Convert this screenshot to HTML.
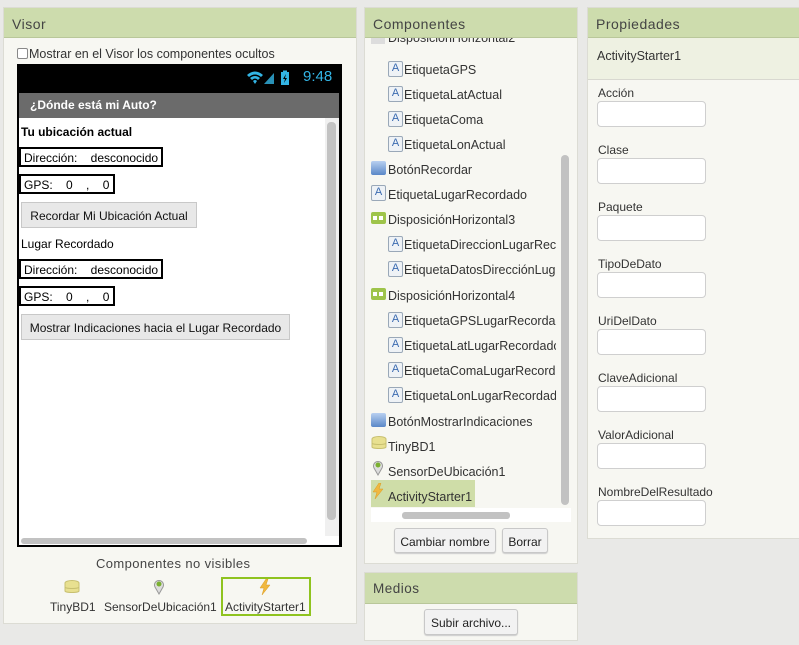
<!DOCTYPE html>
<html><head><meta charset="utf-8"><style>
*{box-sizing:border-box;margin:0;padding:0}
body{width:799px;height:645px;background:#e9e9e7;font-family:"Liberation Sans","DejaVu Sans",sans-serif;position:relative;overflow:hidden;color:#222}
.a{position:absolute}
.panel{position:absolute;background:#f7f7f2;border:1px solid #dcdcd4}
.hdr{position:absolute;left:0;right:0;top:0;height:30px;background:#cddcad;border-bottom:1px solid #b9c79a;font-size:14px;letter-spacing:.5px;color:#444;padding:8px 0 0 8px}
.t{position:absolute;font-size:12.5px;color:#333;white-space:nowrap}
.ic{position:absolute;width:15px;height:16px;background:#eef2f6;border:1px solid #9aa8b8;border-radius:2px;font-size:11px;color:#3a6ab0;text-align:center;line-height:13px}
.btn{position:absolute;background:#f2f2f2;border:1px solid #c8c8c8;border-radius:3px;font-size:12px;color:#222;text-align:center;box-shadow:0 1px 1px #ccc}
.box{position:absolute;border:2px solid #000;font-size:12px;color:#000;padding:2px 0 0 3px;white-space:pre;background:#fff}
.pb{position:absolute;background:#e8e8e8;border:1px solid #c8c8c8;font-size:12px;color:#111;text-align:center}
.inp{position:absolute;left:9px;width:109px;height:26px;background:#fff;border:1px solid #cfcfcf;border-radius:4px}
.lbl{position:absolute;left:10px;font-size:12px;color:#333}
</style></head><body>

<div class="panel" style="left:3px;top:7px;width:354px;height:617px">
 <div class="hdr">Visor</div>
</div>
<div class="a" style="left:17px;top:48px;width:11px;height:11px;border:1px solid #888;border-radius:2px;background:#fff"></div>
<div class="t" style="left:29px;top:47px;font-size:12.5px">Mostrar en el Visor los componentes ocultos</div>

<div class="a" style="left:17px;top:64px;width:325px;height:483px;background:#000"></div>
<div class="a" style="left:303px;top:68px;font-size:15px;color:#33b5e5">9:48</div>
<svg class="a" style="left:246px;top:69px" width="50" height="18" viewBox="0 0 50 18">
 <path d="M1 6 Q9 -1 17 6 L15 8 Q9 3 3 8Z M4 9 Q9 5 14 9 L12 11 Q9 8 6 11Z M7 12 Q9 10 11 12 L9 15Z" fill="#33b5e5"/>
 <path d="M18 15 L28 4 L28 15Z" fill="#33b5e5" opacity=".8"/>
 <rect x="35" y="3" width="8" height="13" fill="#33b5e5"/><rect x="37" y="1.5" width="4" height="2" fill="#33b5e5"/>
 <path d="M40 5 L37 10 L39 10 L38 14 L41 9 L39 9Z" fill="#000"/>
</svg>
<div class="a" style="left:19px;top:93px;width:320px;height:25px;background:#6b6b6b;color:#fff;font-size:12px;font-weight:bold;padding:5px 0 0 11px">¿Dónde está mi Auto?</div>
<div class="a" style="left:19px;top:118px;width:306px;height:418px;background:#fff"></div>
<div class="a" style="left:325px;top:118px;width:14px;height:418px;background:#f0f0f0"></div>
<div class="a" style="left:327px;top:122px;width:9px;height:398px;background:#c2c2c2;border-radius:4px"></div>
<div class="a" style="left:19px;top:536px;width:320px;height:9px;background:#fff"></div>
<div class="a" style="left:21px;top:538px;width:286px;height:6px;background:#c2c2c2;border-radius:3px"></div>

<div class="t" style="left:21px;top:125px;font-weight:bold;color:#000;font-size:12px">Tu ubicación actual</div>
<div class="box" style="left:19px;top:147px;width:144px;height:20px">Dirección:    desconocido</div>
<div class="box" style="left:19px;top:174px;width:96px;height:20px">GPS:    0    ,    0</div>
<div class="pb" style="left:21px;top:202px;width:176px;height:26px;padding-top:6px">Recordar Mi Ubicación Actual</div>
<div class="t" style="left:21px;top:237px;color:#000;font-size:12px">Lugar Recordado</div>
<div class="box" style="left:19px;top:259px;width:144px;height:20px">Dirección:    desconocido</div>
<div class="box" style="left:19px;top:286px;width:96px;height:20px">GPS:    0    ,    0</div>
<div class="pb" style="left:21px;top:314px;width:269px;height:26px;padding-top:6px">Mostrar Indicaciones hacia el Lugar Recordado</div>

<div class="t" style="left:96px;top:556px;font-size:13px;color:#444;letter-spacing:.4px">Componentes no visibles</div>
<svg class="a" style="left:64px;top:580px" width="16" height="14"><ellipse cx="8" cy="3" rx="7" ry="2.5" fill="#e8e090" stroke="#c8c070"/><path d="M1 3v8c0 2 14 2 14 0V3" fill="#e8e090" stroke="#c8c070"/><path d="M1 7c0 2 14 2 14 0" fill="none" stroke="#c8c070"/></svg>
<svg class="a" style="left:153px;top:579px" width="12" height="16"><path d="M6 15 L2 8 A4.5 4.5 0 1 1 10 8Z" fill="#ddd" stroke="#999"/><circle cx="6" cy="5" r="2.5" fill="#7ab030"/></svg>
<div class="a" style="left:221px;top:577px;width:90px;height:39px;border:2px solid #8fc31f"></div>
<svg class="a" style="left:259px;top:579px" width="12" height="16"><path d="M7 0 L1 9 L5 9 L3 16 L11 6 L7 6 L9 0Z" fill="#f0b840" stroke="#d99a20" stroke-width=".5"/></svg>
<div class="t" style="left:50px;top:600px;font-size:12px">TinyBD1</div>
<div class="t" style="left:104px;top:600px;font-size:12px">SensorDeUbicación1</div>
<div class="t" style="left:225px;top:600px;font-size:12px">ActivityStarter1</div>

<div class="panel" style="left:364px;top:7px;width:214px;height:557px">
 <div class="hdr">Componentes</div>
</div>
<div class="a" style="left:371px;top:38px;width:190px;height:8px;overflow:hidden"><div class="t" style="left:17px;top:-7px">DisposiciónHorizontal2</div><div class="a" style="left:0;top:0;width:14px;height:6px;background:#ddd"></div></div>
<div class="a" style="left:561px;top:155px;width:8px;height:350px;background:#c2c2c2;border-radius:4px"></div>
<div class="a" style="left:371px;top:508px;width:200px;height:14px;background:#fff"></div>
<div class="a" style="left:402px;top:512px;width:108px;height:7px;background:#c2c2c2;border-radius:3px"></div>

<div class="ic" style="left:388px;top:61px">A</div><div class="t" style="left:404px;top:63px">EtiquetaGPS</div>
<div class="ic" style="left:388px;top:86px">A</div><div class="t" style="left:404px;top:88px">EtiquetaLatActual</div>
<div class="ic" style="left:388px;top:111px">A</div><div class="t" style="left:404px;top:113px">EtiquetaComa</div>
<div class="ic" style="left:388px;top:136px">A</div><div class="t" style="left:404px;top:138px">EtiquetaLonActual</div>
<div class="a" style="left:371px;top:161px;width:15px;height:14px;background:linear-gradient(#b8d0f0,#5a88c8);border-radius:2px"></div><div class="t" style="left:388px;top:163px">BotónRecordar</div>
<div class="ic" style="left:371px;top:185px">A</div><div class="t" style="left:388px;top:188px">EtiquetaLugarRecordado</div>
<div class="a" style="left:371px;top:212px;width:15px;height:12px;background:#9ec44a;border-radius:2px"><div class="a" style="left:2px;top:4px;width:4px;height:4px;background:#fff"></div><div class="a" style="left:8px;top:4px;width:4px;height:4px;background:#fff"></div></div><div class="t" style="left:388px;top:213px">DisposiciónHorizontal3</div>
<div class="ic" style="left:388px;top:236px">A</div><div class="t" style="left:404px;top:238px;width:152px;overflow:hidden">EtiquetaDireccionLugarRecordado</div>
<div class="ic" style="left:388px;top:261px">A</div><div class="t" style="left:404px;top:263px;width:152px;overflow:hidden">EtiquetaDatosDirecciónLugar</div>
<div class="a" style="left:371px;top:288px;width:15px;height:12px;background:#9ec44a;border-radius:2px"><div class="a" style="left:2px;top:4px;width:4px;height:4px;background:#fff"></div><div class="a" style="left:8px;top:4px;width:4px;height:4px;background:#fff"></div></div><div class="t" style="left:388px;top:289px">DisposiciónHorizontal4</div>
<div class="ic" style="left:388px;top:312px">A</div><div class="t" style="left:404px;top:314px;width:152px;overflow:hidden">EtiquetaGPSLugarRecordado</div>
<div class="ic" style="left:388px;top:337px">A</div><div class="t" style="left:404px;top:339px;width:152px;overflow:hidden">EtiquetaLatLugarRecordado</div>
<div class="ic" style="left:388px;top:362px">A</div><div class="t" style="left:404px;top:364px;width:152px;overflow:hidden">EtiquetaComaLugarRecordado</div>
<div class="ic" style="left:388px;top:387px">A</div><div class="t" style="left:404px;top:389px;width:152px;overflow:hidden">EtiquetaLonLugarRecordado</div>
<div class="a" style="left:371px;top:413px;width:15px;height:14px;background:linear-gradient(#b8d0f0,#5a88c8);border-radius:2px"></div><div class="t" style="left:388px;top:415px">BotónMostrarIndicaciones</div>
<svg class="a" style="left:371px;top:436px" width="16" height="14"><ellipse cx="8" cy="3" rx="7" ry="2.5" fill="#e8e090" stroke="#c8c070"/><path d="M1 3v8c0 2 14 2 14 0V3" fill="#e8e090" stroke="#c8c070"/><path d="M1 7c0 2 14 2 14 0" fill="none" stroke="#c8c070"/></svg><div class="t" style="left:388px;top:440px">TinyBD1</div>
<svg class="a" style="left:372px;top:460px" width="12" height="16"><path d="M6 15 L2 8 A4.5 4.5 0 1 1 10 8Z" fill="#ddd" stroke="#999"/><circle cx="6" cy="5" r="2.5" fill="#7ab030"/></svg><div class="t" style="left:388px;top:465px">SensorDeUbicación1</div>
<div class="a" style="left:371px;top:480px;width:104px;height:27px;background:#cfdda8"></div>
<svg class="a" style="left:372px;top:483px" width="12" height="16"><path d="M7 0 L1 9 L5 9 L3 16 L11 6 L7 6 L9 0Z" fill="#f0b840" stroke="#d99a20" stroke-width=".5"/></svg><div class="t" style="left:388px;top:490px">ActivityStarter1</div>

<div class="btn" style="left:394px;top:528px;width:102px;height:25px;padding-top:6px">Cambiar nombre</div>
<div class="btn" style="left:502px;top:528px;width:46px;height:25px;padding-top:6px">Borrar</div>

<div class="panel" style="left:364px;top:572px;width:214px;height:69px">
 <div class="hdr" style="height:31px;font-size:13.5px">Medios</div>
</div>
<div class="btn" style="left:424px;top:609px;width:94px;height:26px;padding-top:6px">Subir archivo...</div>

<div class="panel" style="left:587px;top:7px;width:213px;height:532px">
 <div class="hdr">Propiedades</div>
 <div class="a" style="left:0;right:0;top:30px;height:42px;background:#eef1e2;border-bottom:1px solid #d8d8d0;font-size:12.5px;color:#333;padding:11px 0 0 9px">ActivityStarter1</div>
 <div class="lbl" style="top:78px">Acción</div><div class="inp" style="top:93px"></div>
 <div class="lbl" style="top:135px">Clase</div><div class="inp" style="top:150px"></div>
 <div class="lbl" style="top:192px">Paquete</div><div class="inp" style="top:207px"></div>
 <div class="lbl" style="top:249px">TipoDeDato</div><div class="inp" style="top:264px"></div>
 <div class="lbl" style="top:306px">UriDelDato</div><div class="inp" style="top:321px"></div>
 <div class="lbl" style="top:363px">ClaveAdicional</div><div class="inp" style="top:378px"></div>
 <div class="lbl" style="top:420px">ValorAdicional</div><div class="inp" style="top:435px"></div>
 <div class="lbl" style="top:477px">NombreDelResultado</div><div class="inp" style="top:492px"></div>
</div>
</body></html>
